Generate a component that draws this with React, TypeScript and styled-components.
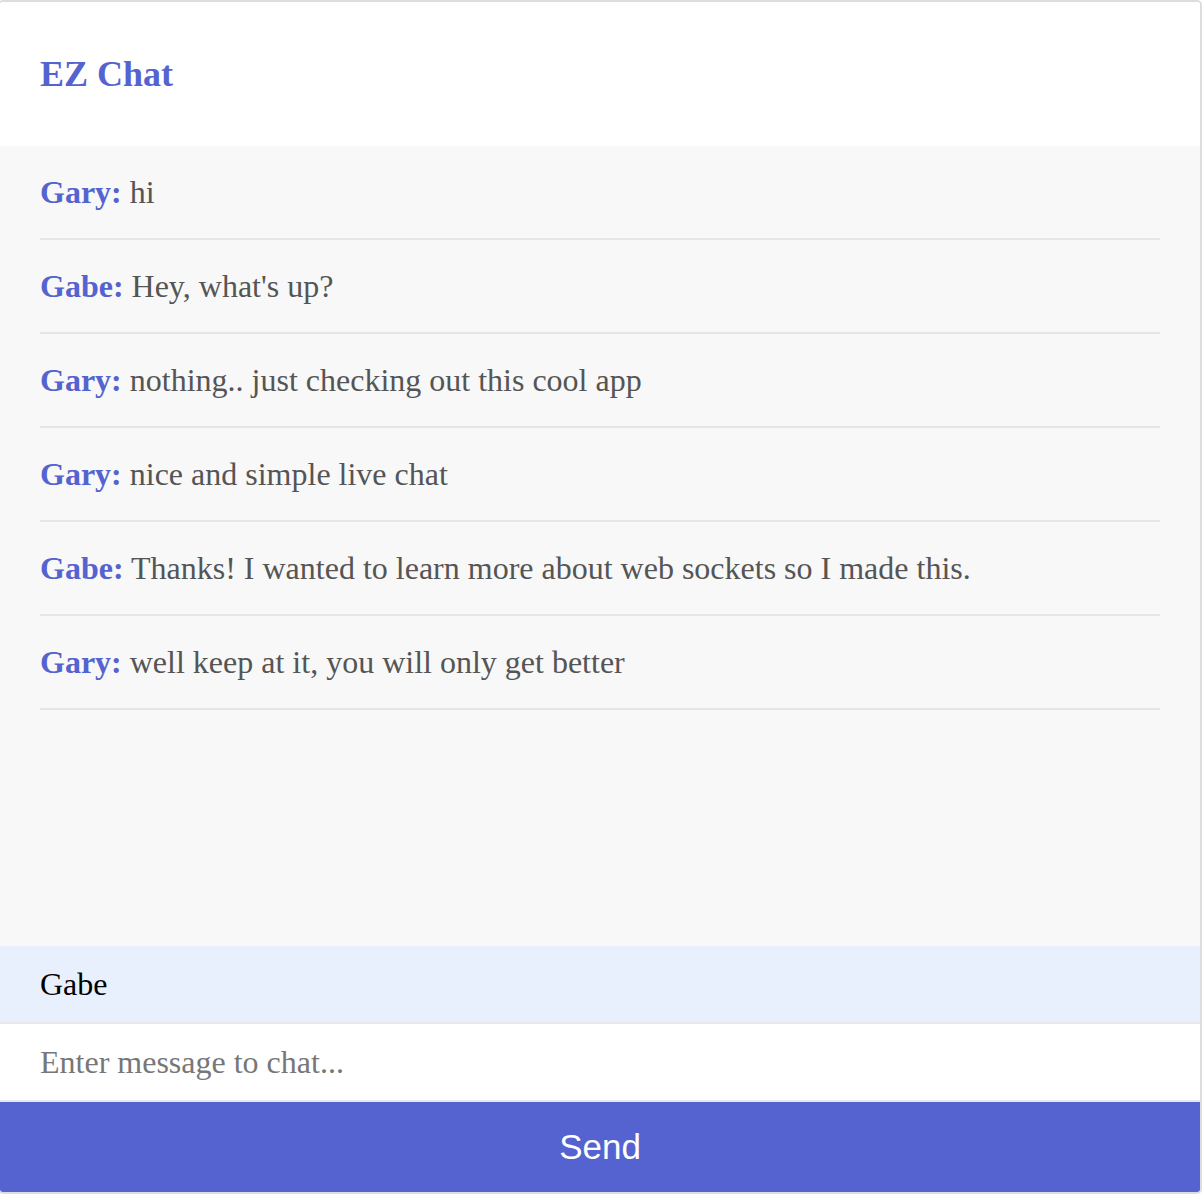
import React from "react";
import styled, { createGlobalStyle } from "styled-components";

const Global = createGlobalStyle`
  html, body { margin: 0; padding: 0; background: #ffffff; }
  body { font-family: "Liberation Serif", "Times New Roman", serif; }
  * { box-sizing: border-box; }
`;

const Card = styled.div`
  width: 1204px;
  height: 1194px;
  margin-left: -2px;
  border: 2px solid #dddddd;
  border-radius: 5px;
  overflow: hidden;
  display: flex;
  flex-direction: column;
  background: #ffffff;
`;

const Header = styled.header`
  height: 144px;
  flex: none;
  display: flex;
  align-items: center;
  padding: 0 40px;
  background: #ffffff;
`;

const Title = styled.h1`
  margin: 0;
  font-family: "Liberation Serif", "Times New Roman", serif;
  font-size: 36px;
  font-weight: 700;
  color: #5563d0;
`;

const Messages = styled.ul`
  list-style: none;
  margin: 0;
  padding: 0 40px;
  height: 800px;
  flex: none;
  background: #f8f8f8;
  overflow: hidden;
`;

const Row = styled.li`
  padding: 28px 0;
  line-height: 36px;
  font-size: 32px;
  color: #555555;
  border-bottom: 2px solid #e6e6e6;
  white-space: nowrap;
`;

const Name = styled.strong`
  color: #5563d0;
  font-weight: 700;
`;

const Field = styled.input<{ $tint?: boolean }>`
  display: block;
  width: 100%;
  height: 78px;
  flex: none;
  margin: 0;
  border: none;
  border-bottom: 2px solid #e8e8e8;
  outline: none;
  padding: 0 40px;
  font-family: "Liberation Serif", "Times New Roman", serif;
  font-size: 32px;
  color: #000000;
  background: ${(p) => (p.$tint ? "#e8f0fe" : "#ffffff")};
  &::placeholder { color: #777777; }
`;

const SendButton = styled.button`
  flex: 1;
  width: 100%;
  margin: 0;
  border: none;
  background: #5563d0;
  color: #ffffff;
  font-family: "Liberation Sans", Arial, Helvetica, sans-serif;
  font-size: 35px;
  cursor: pointer;
  padding: 0;
`;

const messages = [
  { name: "Gary", text: "hi" },
  { name: "Gabe", text: "Hey, what's up?" },
  { name: "Gary", text: "nothing.. just checking out this cool app" },
  { name: "Gary", text: "nice and simple live chat" },
  { name: "Gabe", text: "Thanks! I wanted to learn more about web sockets so I made this." },
  { name: "Gary", text: "well keep at it, you will only get better" },
];

export default function App() {
  return (
    <>
      <Global />
      <Card>
        <Header>
          <Title>EZ Chat</Title>
        </Header>
        <Messages>
          {messages.map((m, i) => (
            <Row key={i}>
              <Name>{m.name}:</Name> {m.text}
            </Row>
          ))}
        </Messages>
        <Field $tint defaultValue="Gabe" />
        <Field placeholder="Enter message to chat..." />
        <SendButton>Send</SendButton>
      </Card>
    </>
  );
}
